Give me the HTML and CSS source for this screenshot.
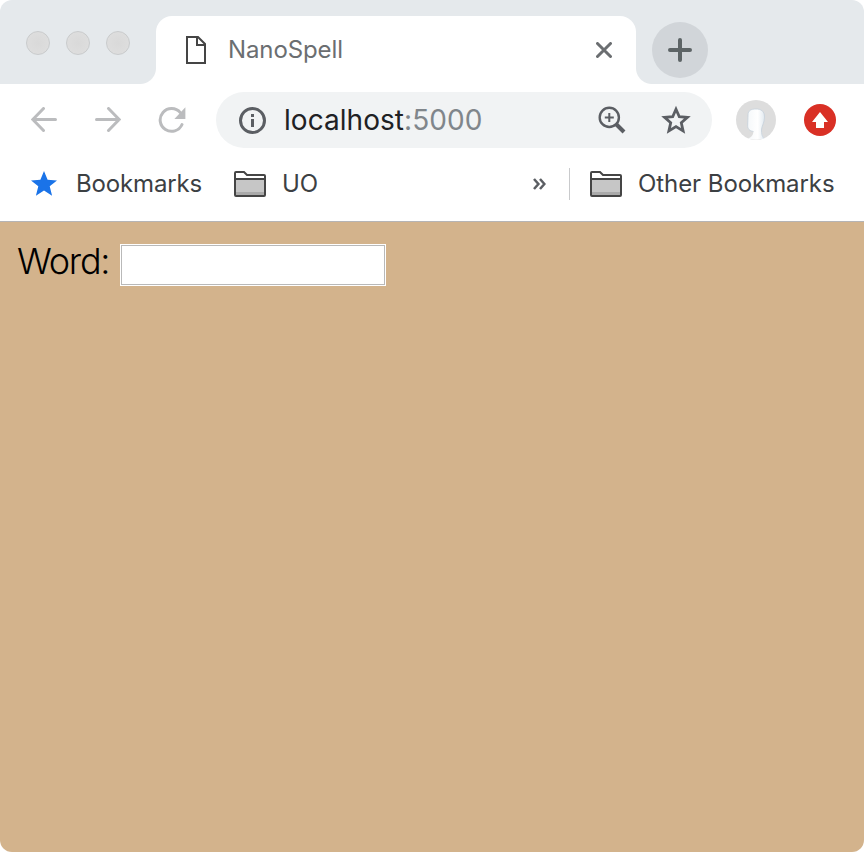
FILE: index.html
```html
<!DOCTYPE html>
<html lang="en">
<head>
<meta charset="utf-8">
<title>NanoSpell</title>
<link rel="stylesheet" href="styles.css">
</head>
<body>
<div class="window">
  <header class="tabs">
    <div class="lights"><i></i><i></i><i></i></div>
    <div class="tab">
      <svg class="page-icon" width="20" height="28" viewBox="0 0 20 28" fill="none" stroke="#454545" stroke-width="2"><path d="M1 1H12L19 8V27H1ZM11 1V9H19"/></svg>
      <span class="tab-title">NanoSpell</span>
      <svg class="close" width="16" height="16" viewBox="0 0 16 16" stroke="#6b6e71" stroke-width="3" stroke-linecap="round"><path d="M1.5 1.5L14.5 14.5M14.5 1.5L1.5 14.5"/></svg>
    </div>
    <div class="new-tab"><svg width="24" height="24" viewBox="0 0 24 24" stroke="#5d6466" stroke-width="4" stroke-linecap="round"><path d="M12 2V22M2 12H22"/></svg></div>
  </header>
  <nav class="toolbar">
    <svg class="back" width="26" height="26" viewBox="0 0 26 26" fill="none" stroke="#bbbcbe" stroke-width="3" stroke-linecap="round"><path d="M24.5 12.5H2M12.5 1.5L1.8 12.5L12.5 23.5"/></svg>
    <svg class="forward" width="26" height="26" viewBox="0 0 26 26" fill="none" stroke="#bbbcbe" stroke-width="3" stroke-linecap="round"><path d="M1.5 12.5H24M13.5 1.5L24.2 12.5L13.5 23.5"/></svg>
    <svg class="reload" width="28" height="28" viewBox="0 0 28 28" fill="none"><path d="M22.3 6.6A11.4 11.4 0 1 0 24 18.5" stroke="#bbbcbe" stroke-width="3" stroke-linecap="round"/><path d="M27.4 1.2V13H16.4Z" fill="#bbbcbe"/></svg>
    <div class="address">
      <svg class="info" width="28" height="28" viewBox="0 0 28 28"><circle cx="13.5" cy="14.5" r="12" fill="none" stroke="#5b5e63" stroke-width="3"/><path d="M12 8h3v3h-3zM12 13h3v8h-3z" fill="#5b5e63"/></svg>
      <span class="url">localhost<span class="port">:5000</span></span>
      <svg class="magnify" width="28" height="28" viewBox="0 0 28 28" fill="none" stroke="#5b5e63"><circle cx="11.3" cy="11.4" r="9.6" stroke-width="2.4"/><path d="M11.3 7V16M6.8 11.5H15.8" stroke-width="2"/><path d="M18 18L26 26" stroke-width="4"/></svg>
      <svg class="favorite" width="30" height="30" viewBox="0 0 30 30" fill="none" stroke="#5b5e63" stroke-width="2.8"><path d="M15 4.2L18.3 11.7L26.4 12.4L20.3 17.8L22.1 25.9L15 21.6L7.9 25.9L9.7 17.8L3.6 12.4L11.7 11.7Z"/></svg>
    </div>
    <svg class="avatar" width="40" height="40" viewBox="0 0 40 40"><defs><linearGradient id="face"><stop offset="0" stop-color="#f5f8fa"/><stop offset=".6" stop-color="#fff"/><stop offset="1" stop-color="#e2eaf0"/></linearGradient></defs><circle cx="20" cy="20" r="20" fill="#dddddd"/><path d="M12 15C12 10.500 15 9 20 9S28.500 11 28.500 17C28.500 23 25.500 26 25.500 30C25.500 34 27 37 28.500 38.500Q20 41 11.500 38.500C14.500 38 17 36 17.500 31.500C13.500 31 11.500 29 11.700 25Z" fill="url(#face)"/><path d="M17.500 31.500C13.500 31 11.500 29 11.700 25L12 15C12 10.500 15 9 20 9S28.500 11 28.500 17C28.500 23 25.500 26 25.500 30C25.500 34 26 36 27.500 38" fill="none" stroke="#c5d1da" stroke-width=".8"/></svg>
    <svg class="update" width="32" height="32" viewBox="0 0 32 32"><circle cx="16" cy="16" r="16" fill="#d93025"/><path d="M16 8L24 18H20V24H12V18H8Z" fill="#fff"/></svg>
  </nav>
  <div class="bookmarks">
    <svg class="star" width="26" height="26" viewBox="0 0 26 26"><path d="M13 0L16.6 8.8L26 9.4L18.7 15.3L21.1 24.7L13 19.5L4.900 24.700L7.300 15.300L0 9.400L9.400 8.800Z" fill="#1a73e8"/></svg>
    <span class="label label-main">Bookmarks</span>
    <svg class="folder" width="32" height="26" viewBox="0 0 32 26"><path d="M2 8H30V24H2Z" fill="#c6c6c6"/><path d="M2 21H30V24H2Z" fill="#aaa"/><path d="M1 24V2Q1 1 2 1H10L13 4H30Q31 4 31 5V24Q31 25 30 25H2Q1 25 1 24ZM1 8H31" fill="none" stroke="#454545" stroke-width="2"/></svg>
    <span class="label label-uo">UO</span>
    <svg class="more" width="13" height="12" viewBox="0 0 13 12" fill="none" stroke="#5b5e63" stroke-width="2.5"><path d="M1 1L5.4 6L1 11M7 1L11.4 6L7 11"/></svg>
    <div class="divider"></div>
    <svg class="folder-other" width="32" height="26" viewBox="0 0 32 26"><path d="M2 8H30V24H2Z" fill="#c6c6c6"/><path d="M2 21H30V24H2Z" fill="#aaa"/><path d="M1 24V2Q1 1 2 1H10L13 4H30Q31 4 31 5V24Q31 25 30 25H2Q1 25 1 24ZM1 8H31" fill="none" stroke="#454545" stroke-width="2"/></svg>
    <span class="label label-other">Other Bookmarks</span>
  </div>
  <main class="content">
    <label class="word" for="word">Word:</label>
    <input id="word" class="field" type="text">
  </main>
</div>
</body>
</html>
```
FILE: styles.css
```css
* { box-sizing: border-box; }
body { margin: 0; background: #fff; font-family: Inter, sans-serif; }
svg { display: block; flex: none; }
.window { width: 864px; height: 852px; display: flex; flex-direction: column; overflow: hidden; border-radius: 12px; background: #fff; }
.tabs { height: 84px; display: flex; background: #e5e9ec; flex: none; }
.lights { display: flex; gap: 16px; width: 156px; padding: 31px 0 0 26px; }
.lights i { width: 24px; height: 24px; border-radius: 50%; border: 1px solid #c9cbcc; background: radial-gradient(#d9d9d9, #dfdfdf); }
.tab { position: relative; width: 480px; height: 68px; margin-top: 16px; border-radius: 16px 16px 0 0; background: #fff; display: flex; align-items: center; padding: 0 24px 0 30px; }
.tab::before, .tab::after { content: ""; position: absolute; bottom: 0; width: 16px; height: 16px; }
.tab::before { left: -16px; background: radial-gradient(circle at 0 0, transparent 15.5px, #fff 16.5px); }
.tab::after { right: -16px; background: radial-gradient(circle at 100% 0, transparent 15.5px, #fff 16.5px); }
.tab-title { margin-left: 22px; font-size: 24px; letter-spacing: -0.1px; line-height: 30px; color: #6b6e71; white-space: nowrap; }
.close { margin-left: auto; }
.new-tab { width: 56px; height: 56px; margin: 22px 0 0 16px; border-radius: 50%; background: #d1d5d9; display: grid; place-items: center; }
.toolbar { height: 72px; display: flex; align-items: center; padding-left: 31px; flex: none; }
.forward { margin-left: 38px; }
.reload { margin-left: 37px; }
.address { width: 496px; height: 56px; margin: 0 24px 0 30px; border-radius: 28px; background: #f1f3f4; display: flex; align-items: center; padding: 0 21px 0 23px; }
.url { margin-left: 17px; font-size: 28px; letter-spacing: 0.05px; line-height: 36px; color: #202124; white-space: nowrap; }
.port { color: #80868b; }
.magnify { margin-left: auto; }
.favorite { margin-left: 35px; }
.update { margin-left: 28px; }
.bookmarks { height: 66px; display: flex; align-items: center; padding: 0 0 10px 31px; flex: none; }
.star { margin-top: -1px; }
.label { font-size: 24px; letter-spacing: -0.15px; line-height: 32px; color: #3c4043; white-space: nowrap; }
.label-main { margin-left: 19px; width: 158px; flex: none; }
.folder, .folder-other { margin-top: -1px; }
.label-uo { margin-left: 16px; }
.more { margin-left: auto; }
.divider { width: 1px; height: 32px; margin: 0 20px 0 23px; background: #c9cacc; }
.label-other { width: 226px; margin-left: 16px; letter-spacing: -0.07px; flex: none; }
.content { flex: 1; border-top: 1px solid #b5b4b5; background: #d3b38c; display: flex; align-items: flex-start; padding: 22px 18px; margin-top: -1px; }
.word { width: 103px; margin-left: -1px; font-size: 36px; letter-spacing: -1.25px; line-height: 35px; font-weight: 300; color: #000; white-space: nowrap; }
.field { width: 266px; height: 42px; border: 1px solid #fff; outline: 1px solid #b9b9b9; outline-offset: -2px; background: #fff; padding: 3px 5px; font: 300 30px Inter, sans-serif; }
```
